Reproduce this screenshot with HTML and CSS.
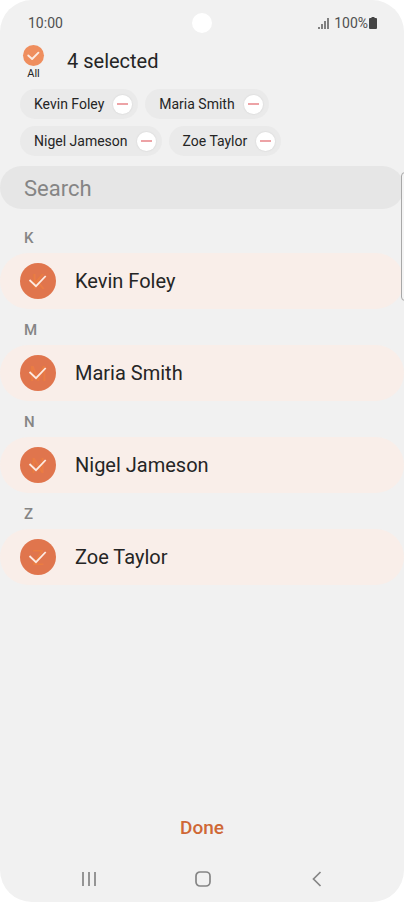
FILE: index.html
```html
<!DOCTYPE html>
<html lang="en">
<head>
<meta charset="utf-8">
<meta name="viewport" content="width=device-width, initial-scale=1">
<title>Select contacts</title>
<link rel="stylesheet" href="styles.css">
</head>
<body>
<div class="phone">
  <span class="camera"></span>
  <span class="edge-panel"></span>
  <div class="status">
    <span>10:00</span>
    <span class="status-right">
      <svg class="signal" viewBox="0 0 12 12" aria-hidden="true"><path d="M1 12v-2M4 12V7M7 12V4M10 12V1" /></svg>
      <span>100%</span>
      <svg class="battery" viewBox="0 0 8 12" aria-hidden="true"><path d="M2.500 0h3v1H7q1 0 1 1v9q0 1-1 1H1q-1 0-1-1V2q0-1 1-1h1.500z" /></svg>
    </span>
  </div>

  <header class="header">
    <label class="all">
      <span class="tick tick-small">
        <input type="checkbox" checked>
        <svg viewBox="0 0 20 20" aria-hidden="true"><path d="M5 10l3.700 3.300 6-6" /></svg>
      </span>
      <span>All</span>
    </label>
    <h1>4 selected</h1>
  </header>

  <ul class="chips">
    <li class="chip"><span>Kevin Foley</span><button type="button" aria-label="Remove Kevin Foley"></button></li>
    <li class="chip"><span>Maria Smith</span><button type="button" aria-label="Remove Maria Smith"></button></li>
    <li class="chip"><span>Nigel Jameson</span><button type="button" aria-label="Remove Nigel Jameson"></button></li>
    <li class="chip"><span>Zoe Taylor</span><button type="button" aria-label="Remove Zoe Taylor"></button></li>
  </ul>

  <input class="search" type="search" placeholder="Search" aria-label="Search">

  <main class="contacts">
    <section>
      <h2>K</h2>
      <label class="contact">
        <span class="tick"><input type="checkbox" checked><span class="initial" aria-hidden="true">K</span><svg viewBox="0 0 36 36" aria-hidden="true"><path d="M9.500 17l6.500 6.200 9.700-10.200" /></svg></span>
        <span>Kevin Foley</span>
      </label>
    </section>
    <section>
      <h2>M</h2>
      <label class="contact">
        <span class="tick"><input type="checkbox" checked><span class="initial" aria-hidden="true">M</span><svg viewBox="0 0 36 36" aria-hidden="true"><path d="M9.500 17l6.500 6.200 9.700-10.200" /></svg></span>
        <span>Maria Smith</span>
      </label>
    </section>
    <section>
      <h2>N</h2>
      <label class="contact">
        <span class="tick"><input type="checkbox" checked><span class="initial" aria-hidden="true">N</span><svg viewBox="0 0 36 36" aria-hidden="true"><path d="M9.500 17l6.500 6.200 9.700-10.200" /></svg></span>
        <span>Nigel Jameson</span>
      </label>
    </section>
    <section>
      <h2>Z</h2>
      <label class="contact">
        <span class="tick"><input type="checkbox" checked><span class="initial" aria-hidden="true">Z</span><svg viewBox="0 0 36 36" aria-hidden="true"><path d="M9.500 17l6.500 6.200 9.700-10.200" /></svg></span>
        <span>Zoe Taylor</span>
      </label>
    </section>
  </main>

  <button class="done" type="button">Done</button>

  <nav class="nav">
    <button type="button" aria-label="Recent apps"><svg viewBox="0 0 20 20"><path d="M4 3v14M10 3v14M16 3v14" /></svg></button>
    <button type="button" aria-label="Home"><svg viewBox="0 0 20 20"><rect x="3" y="3" width="14" height="14" rx="4" /></svg></button>
    <button type="button" aria-label="Back"><svg viewBox="0 0 20 20"><path d="M13.500 3l-7 7 7 7" /></svg></button>
  </nav>
</div>
</body>
</html>
```
FILE: styles.css
```css
* { box-sizing: border-box; }

body {
  margin: 0;
  background: #fff;
  color: #252525;
  font-family: Roboto, "Liberation Sans", sans-serif;
}

h1, h2, ul { margin: 0; padding: 0; font-weight: 400; }

button { border: 0; padding: 0; background: none; font: inherit; cursor: pointer; }

.phone {
  position: relative;
  display: flex;
  flex-direction: column;
  min-height: 100vh;
  margin-right: 1px;
  overflow: hidden;
  border-radius: 32px;
  background: #f1f1f1;
}

.camera {
  position: absolute;
  top: 13px;
  left: 50%;
  width: 20px;
  height: 20px;
  margin-left: -10px;
  border-radius: 50%;
  background: #fff;
}

.edge-panel {
  position: absolute;
  top: 172px;
  right: -5px;
  width: 8px;
  height: 129px;
  border: 1px solid #a8a8a8;
  border-radius: 4px;
  background: #f4f4f4;
}

.status {
  display: flex;
  justify-content: space-between;
  align-items: center;
  height: 24px;
  margin: 11px 27px 0 28px;
  color: #505050;
  font-size: 14px;
}

.status-right { display: flex; align-items: center; }
.signal { width: 12px; height: 12px; margin-right: 4px; fill: none; stroke: #505050; stroke-width: 1.4; }
.battery { width: 8px; height: 12px; margin-left: 1px; fill: #454545; }

.header {
  display: flex;
  align-items: center;
  gap: 23px;
  height: 36px;
  margin: 8px 23px 10px;
}

.all { display: flex; flex-direction: column; align-items: center; padding-top: 4px; font-size: 11px; line-height: 16px; }
h1 { font-size: 20px; line-height: 24px; }

.tick { position: relative; display: block; flex: none; width: 36px; height: 36px; }
.tick input {
  display: block;
  width: 100%;
  height: 100%;
  margin: 0;
  appearance: none;
  border-radius: 50%;
  background: #e0754d;
}
.tick svg {
  position: absolute;
  inset: 0;
  fill: none;
  stroke: #fdebe2;
  stroke-width: 1.8;
  pointer-events: none;
}
.initial {
  position: absolute;
  inset: 0;
  color: #ea7c42;
  font-size: 20px;
  line-height: 38px;
  text-align: center;
  pointer-events: none;
}
.tick-small { width: 21px; height: 21px; }
.tick-small input { background: #ef8e5e; }
.tick-small svg { stroke-linecap: round; stroke-linejoin: round; }

.chips { display: flex; flex-wrap: wrap; gap: 7px; margin: 0 20px; list-style: none; }
.chip {
  display: flex;
  align-items: center;
  gap: 9px;
  height: 30px;
  padding: 0 6px 0 14px;
  border-radius: 15px;
  background: #eaeaea;
  font-size: 14px;
}
.chip button {
  display: grid;
  place-items: center;
  width: 19px;
  height: 19px;
  border-radius: 50%;
  background: #fff;
  box-shadow: 0 0 1px 1px #e1e1e1;
}
.chip button::before { content: ""; width: 11px; height: 2px; background: #eda3a6; }

.search {
  height: 43px;
  margin: 10px 0 8px;
  padding: 2px 24px 0;
  appearance: none;
  border: 0;
  border-radius: 22px;
  background: #e6e6e6;
  color: #252525;
  font: 22px Roboto, "Liberation Sans", sans-serif;
}
.search::placeholder { color: #858585; opacity: 1; }

h2 {
  height: 36px;
  padding-left: 24px;
  color: #858585;
  font-size: 15px;
  font-weight: 500;
  line-height: 42px;
}

.contact {
  display: flex;
  align-items: center;
  gap: 19px;
  height: 56px;
  padding: 0 20px;
  border-radius: 28px;
  background: #f9eee9;
  font-size: 20px;
}

.done {
  align-self: center;
  margin-top: auto;
  padding: 0 16px;
  color: #cf6836;
  font-size: 19px;
  font-weight: 500;
  line-height: 32px;
}

.nav { display: flex; justify-content: space-between; margin: 25px 77px 13px 79px; }
.nav button { height: 20px; }
.nav svg { display: block; width: 20px; height: 20px; fill: none; stroke: #858585; stroke-width: 1.7; }
```
